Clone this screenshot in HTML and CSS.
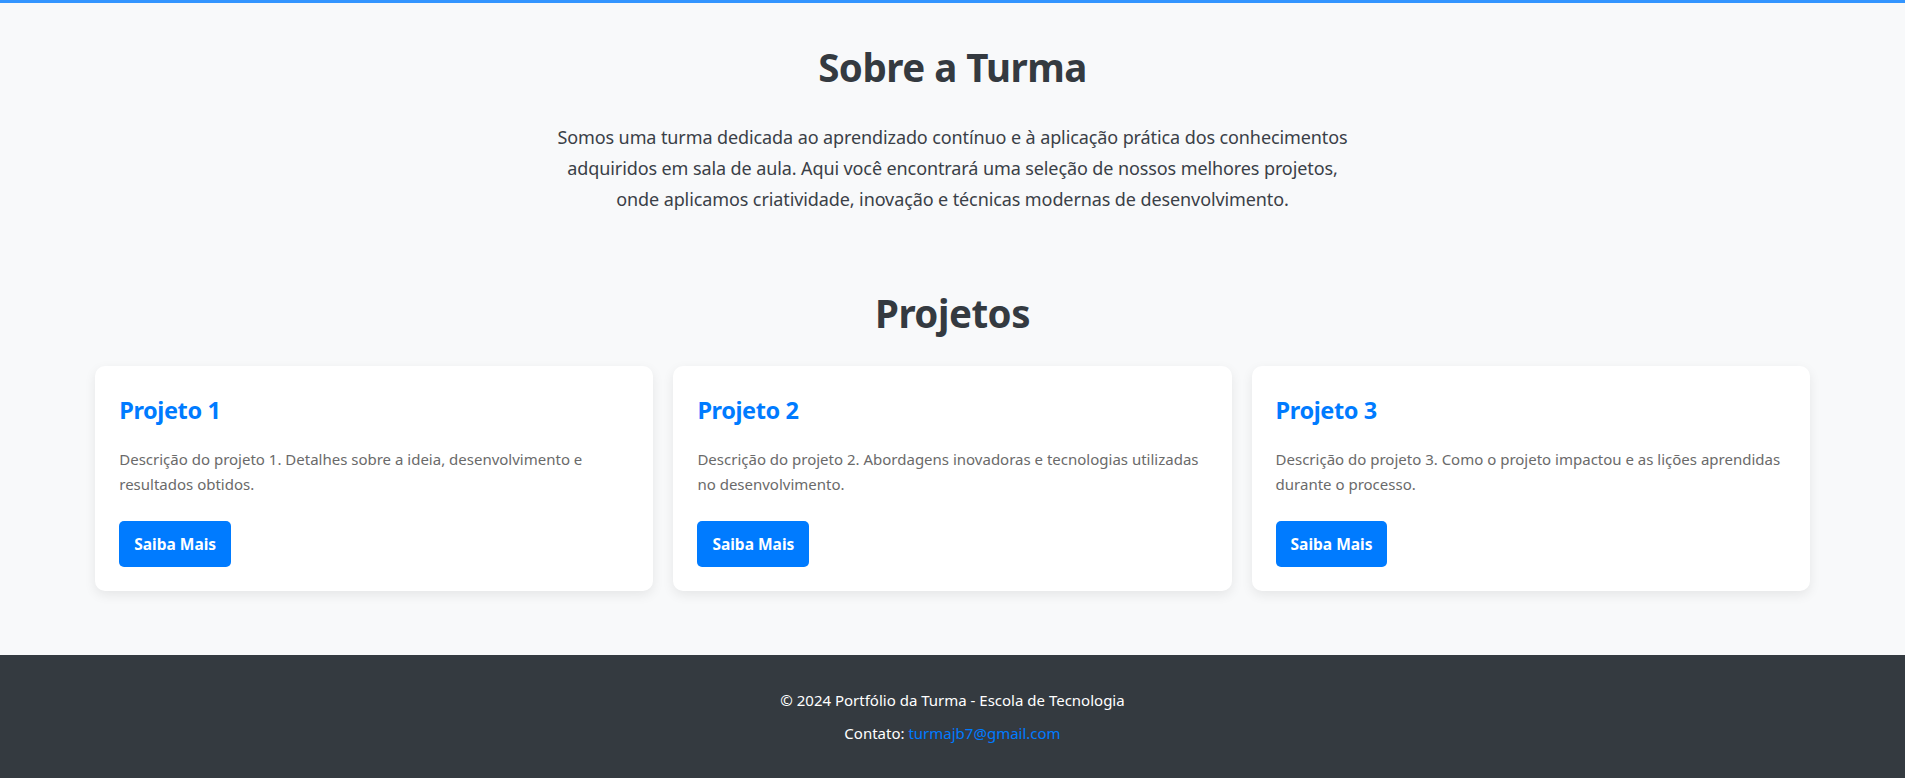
FILE: index.html
```html
<!DOCTYPE html>
<html lang="pt-BR">
<head>
<meta charset="UTF-8">
<title>Portfólio da Turma</title>
<link rel="stylesheet" href="styles.css">
</head>
<body>
<div class="topbar"></div>
<main>
  <section class="about">
    <h2 class="section-title">Sobre a Turma</h2>
    <p class="about-text">Somos uma turma dedicada ao aprendizado contínuo e à aplicação prática dos conhecimentos adquiridos em sala de aula. Aqui você encontrará uma seleção de nossos melhores projetos, onde aplicamos criatividade, inovação e técnicas modernas de desenvolvimento.</p>
  </section>
  <section class="projects">
    <h2 class="section-title">Projetos</h2>
    <div class="grid">
      <div class="card">
        <h3>Projeto 1</h3>
        <p>Descrição do projeto 1. Detalhes sobre a ideia, desenvolvimento e resultados obtidos.</p>
        <a class="btn" href="#">Saiba Mais</a>
      </div>
      <div class="card">
        <h3>Projeto 2</h3>
        <p>Descrição do projeto 2. Abordagens inovadoras e tecnologias utilizadas no desenvolvimento.</p>
        <a class="btn" href="#">Saiba Mais</a>
      </div>
      <div class="card">
        <h3>Projeto 3</h3>
        <p>Descrição do projeto 3. Como o projeto impactou e as lições aprendidas durante o processo.</p>
        <a class="btn" href="#">Saiba Mais</a>
      </div>
    </div>
  </section>
</main>
<footer class="footer">
  <p>© 2024 Portfólio da Turma - Escola de Tecnologia</p>
  <p>Contato: <a href="#">turmajb7@gmail.com</a></p>
</footer>
</body>
</html>
```

FILE: styles.css
```css
* { box-sizing: border-box; }
html, body { margin: 0; padding: 0; }
body {
  font-family: "Noto Sans", "Open Sans", sans-serif;
  background: #f8f9fa;
  color: #343a40;
  line-height: 1.6;
}
.topbar { height: 3px; background: #3395ff; }
main { padding: 0 5%; }
.about { padding-top: 40px; text-align: center; }
.section-title {
  font-size: 38.5px;
  letter-spacing: -0.5px;
  line-height: 48px;
  font-weight: 700;
  color: #343a40;
  margin: 0 0 31px;
  text-align: center;
}
.about-text {
  max-width: 800px;
  margin: 0 auto;
  font-size: 18px;
  letter-spacing: -0.1px;
  line-height: 31px;
  color: #3a4047;
}
.projects { padding-top: 74px; padding-bottom: 64px; }
.projects .section-title { margin-bottom: 29px; }
.grid {
  display: grid;
  grid-template-columns: repeat(3, 1fr);
  gap: 20px;
}
.card {
  background: #fff;
  border-radius: 10px;
  padding: 25px 24px 24px;
  box-shadow: 0 4px 12px rgba(0, 0, 0, 0.08);
}
.card h3 {
  margin: 0 0 18px;
  font-size: 23.5px;
  letter-spacing: -0.4px;
  line-height: 38px;
  color: #007bff;
  font-weight: 700;
}
.card p {
  margin: 0 0 24px;
  font-size: 15px;
  line-height: 25px;
  color: #6a6a6a;
}
.btn {
  display: inline-block;
  background: #007bff;
  color: #fff;
  text-decoration: none;
  font-weight: 700;
  font-size: 15.5px;
  line-height: 26px;
  padding: 10px 15px;
  border-radius: 5px;
}
.footer {
  background: #343a40;
  color: #fff;
  text-align: center;
  padding: 33px 0 30px;
  font-size: 15px;
  line-height: 24px;
}
.footer p { margin: 0 0 9px; }
.footer a { color: #007bff; text-decoration: none; }
```
